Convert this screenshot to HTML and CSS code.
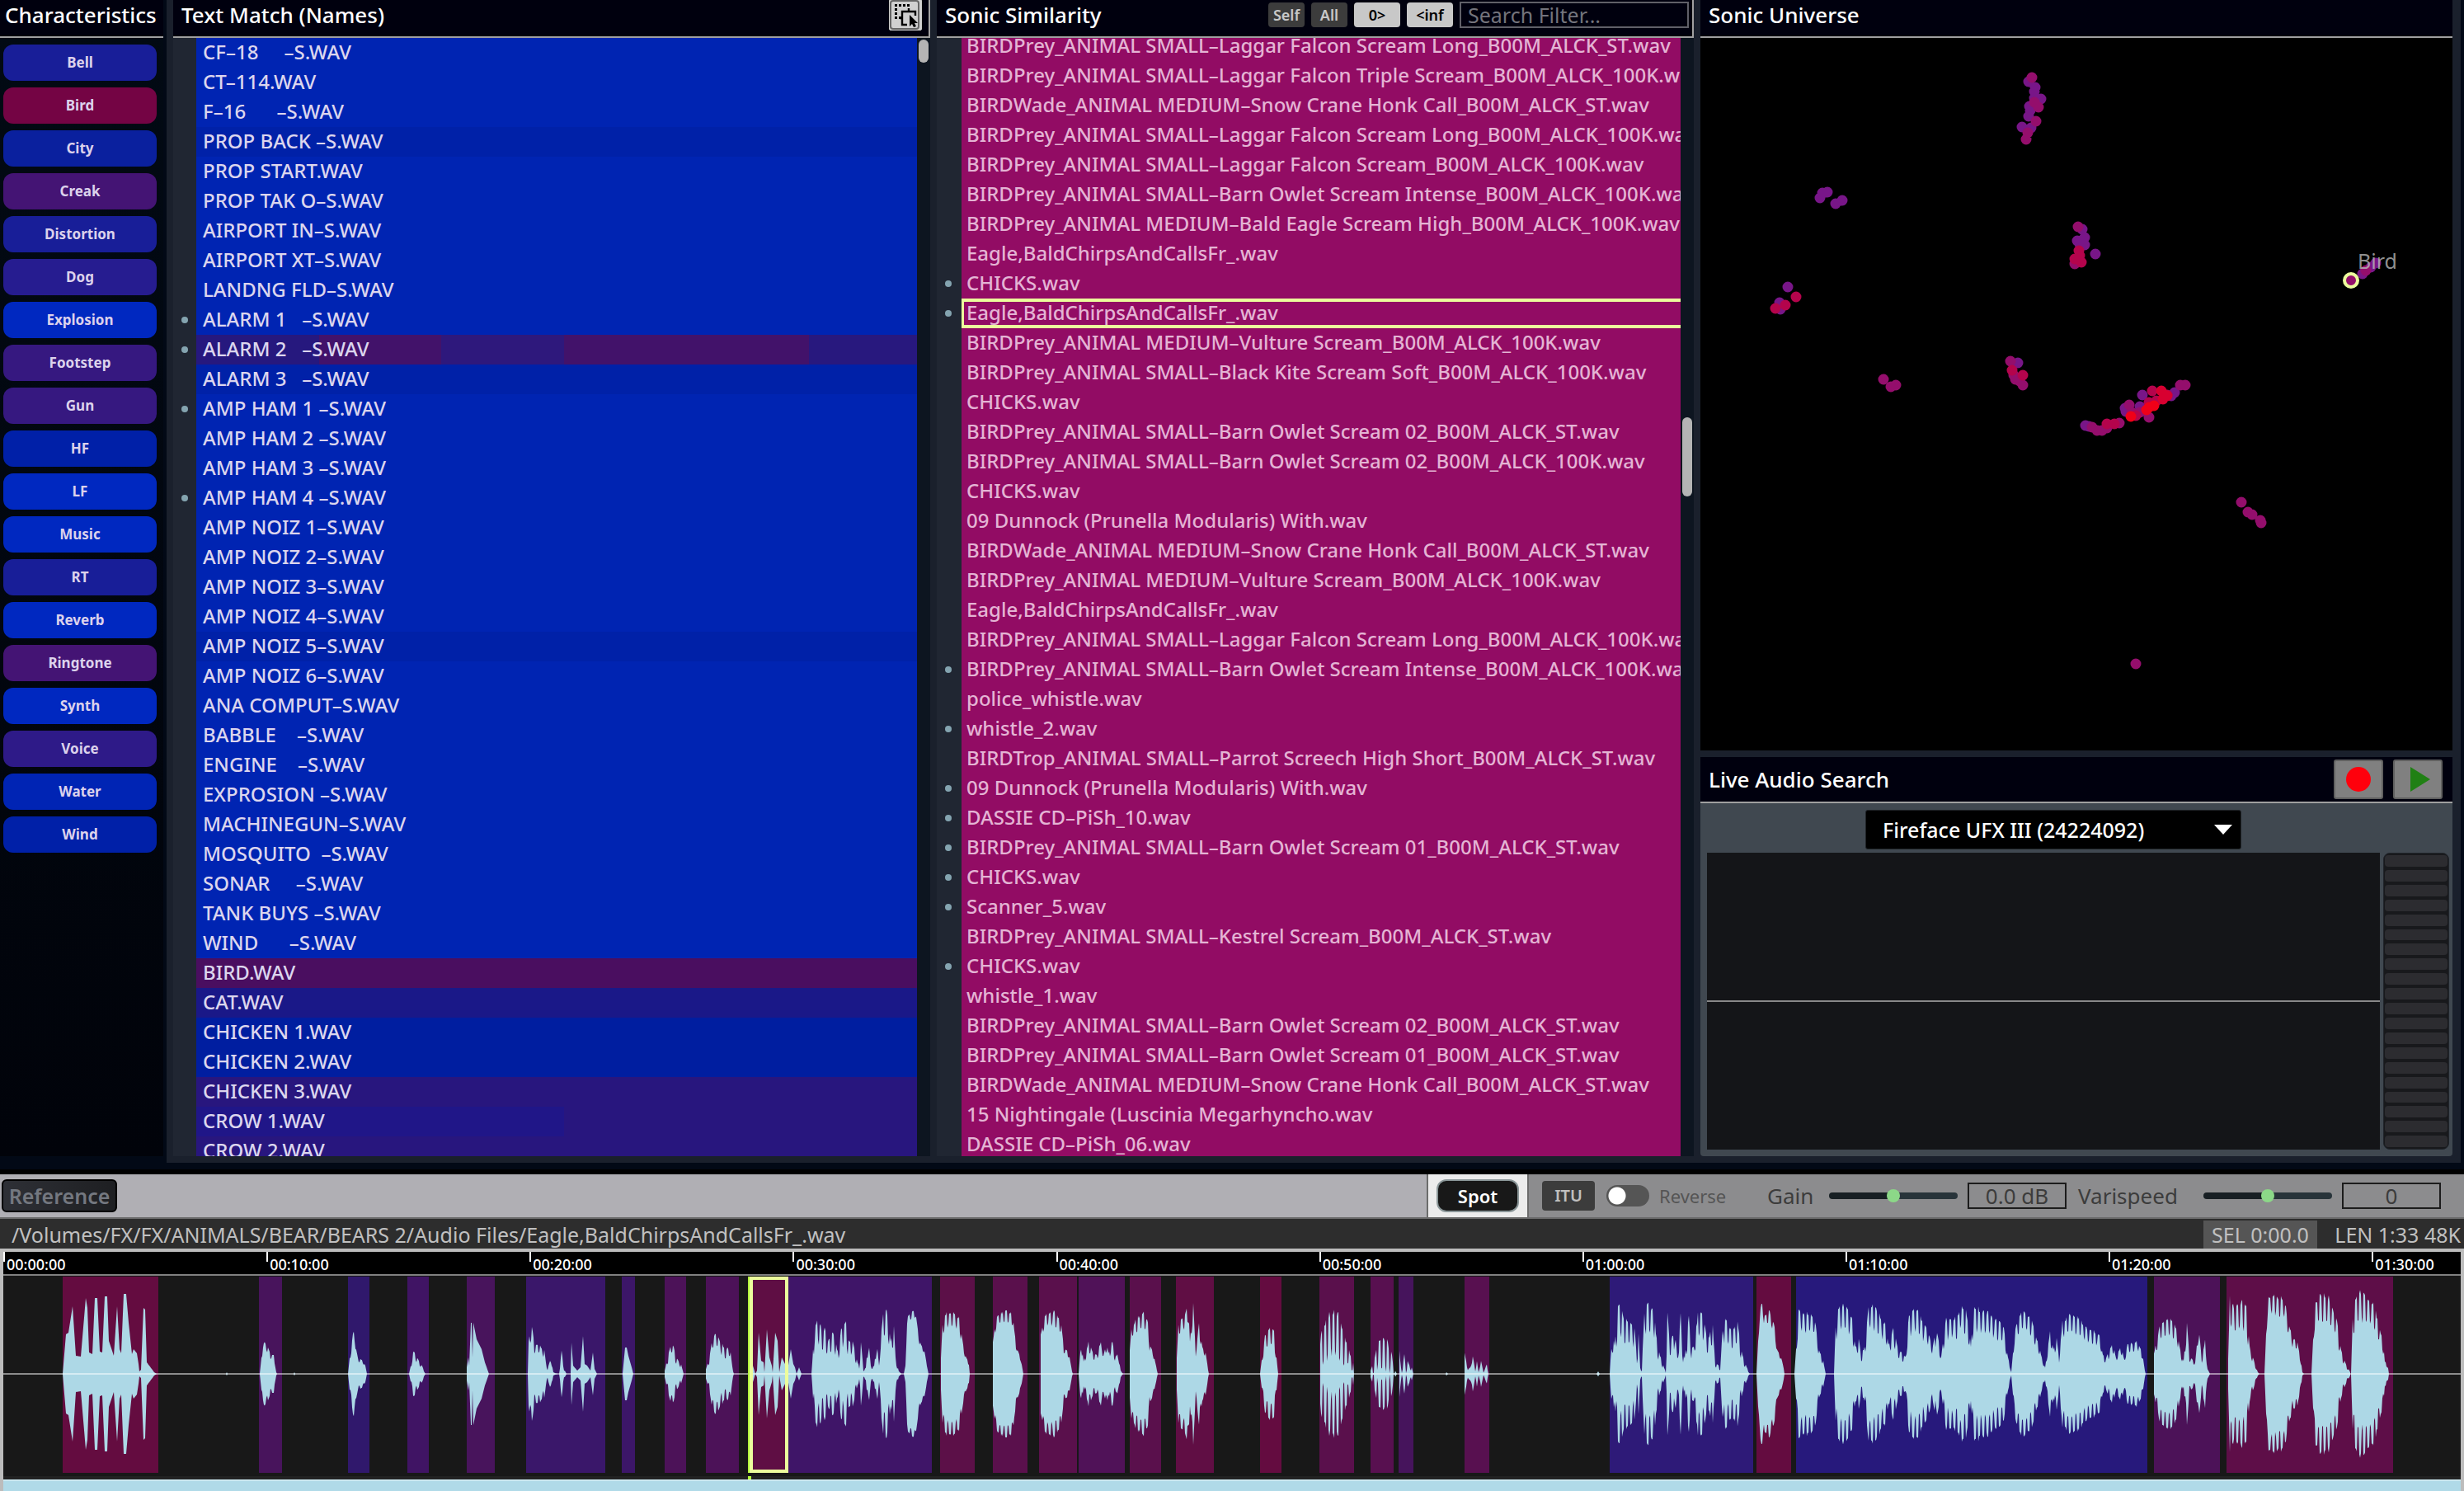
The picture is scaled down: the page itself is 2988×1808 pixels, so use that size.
FILE: index.html
```html
<!DOCTYPE html>
<html lang="en">
<head>
<meta charset="utf-8">
<title>Sonic Search</title>
<link rel="stylesheet" href="styles.css">
</head>
<body>
<main class="top">
  <section class="characteristics">
    <h2 class="head">Characteristics</h2>
    <div class="tags">
      <button class="tag c-indigo">Bell</button>
      <button class="tag c-crimson">Bird</button>
      <button class="tag c-navy">City</button>
      <button class="tag c-plum">Creak</button>
      <button class="tag c-indigo">Distortion</button>
      <button class="tag c-violet">Dog</button>
      <button class="tag c-bright">Explosion</button>
      <button class="tag c-purple">Footstep</button>
      <button class="tag c-purple">Gun</button>
      <button class="tag c-blue">HF</button>
      <button class="tag c-bright">LF</button>
      <button class="tag c-bright">Music</button>
      <button class="tag c-indigo">RT</button>
      <button class="tag c-bright">Reverb</button>
      <button class="tag c-plum">Ringtone</button>
      <button class="tag c-bright">Synth</button>
      <button class="tag c-voice">Voice</button>
      <button class="tag c-water">Water</button>
      <button class="tag c-blue">Wind</button>
    </div>
  </section>

  <div class="workspace">
    <section class="panel">
      <header class="head head-line">
        <h2>Text Match (Names)</h2>
        <button class="pick" aria-label="Select mode">
          <svg viewBox="0 0 36 36" width="36" height="36">
            <path d="M6 5h3v3h-3zM11 5h3v3h-3zM16 5h3v3h-3zM21 5h3v3h-3zM6 10h3v3h-3zM6 15h3v3h-3zM6 20h3v3h-3zM11 20h3v3h-3z"/>
            <path d="M21 30h-6V14h16v5M23 14v-4M15 22h-3" fill="none" stroke="#000" stroke-width="2.4"/>
            <path d="M24 18v14l3-3 2 4 3-1-2-4h4z"/>
          </svg>
        </button>
      </header>
      <div class="scroller">
        <ul class="list names">
          <li>CF–18     –S.WAV</li>
          <li>CT–114.WAV</li>
          <li>F–16      –S.WAV</li>
          <li class="deep">PROP BACK –S.WAV</li>
          <li>PROP START.WAV</li>
          <li>PROP TAK O–S.WAV</li>
          <li>AIRPORT IN–S.WAV</li>
          <li>AIRPORT XT–S.WAV</li>
          <li>LANDNG FLD–S.WAV</li>
          <li class="dot">ALARM 1   –S.WAV</li>
          <li class="dot mixed">ALARM 2   –S.WAV</li>
          <li class="deep">ALARM 3   –S.WAV</li>
          <li class="dot">AMP HAM 1 –S.WAV</li>
          <li>AMP HAM 2 –S.WAV</li>
          <li>AMP HAM 3 –S.WAV</li>
          <li class="dot">AMP HAM 4 –S.WAV</li>
          <li>AMP NOIZ 1–S.WAV</li>
          <li>AMP NOIZ 2–S.WAV</li>
          <li>AMP NOIZ 3–S.WAV</li>
          <li>AMP NOIZ 4–S.WAV</li>
          <li class="deep">AMP NOIZ 5–S.WAV</li>
          <li>AMP NOIZ 6–S.WAV</li>
          <li>ANA COMPUT–S.WAV</li>
          <li>BABBLE    –S.WAV</li>
          <li>ENGINE    –S.WAV</li>
          <li>EXPROSION –S.WAV</li>
          <li>MACHINEGUN–S.WAV</li>
          <li>MOSQUITO  –S.WAV</li>
          <li>SONAR     –S.WAV</li>
          <li>TANK BUYS –S.WAV</li>
          <li>WIND      –S.WAV</li>
          <li class="wine">BIRD.WAV</li>
          <li class="ink">CAT.WAV</li>
          <li class="navy">CHICKEN 1.WAV</li>
          <li class="navy">CHICKEN 2.WAV</li>
          <li class="violet">CHICKEN 3.WAV</li>
          <li class="split">CROW 1.WAV</li>
          <li class="violet">CROW 2.WAV</li>
        </ul>
        <div class="track"><div class="thumb thumb-top"></div></div>
      </div>
    </section>

    <section class="panel">
      <header class="head head-line">
        <h2>Sonic Similarity</h2>
        <div class="filters">
          <button class="chip">Self</button>
          <button class="chip">All</button>
          <button class="chip chip-on">0&gt;</button>
          <button class="chip chip-on">&lt;inf</button>
          <input class="search" type="text" placeholder="Search Filter..." aria-label="Search Filter">
        </div>
      </header>
      <div class="scroller">
        <ul class="list matches">
          <li>BIRDPrey_ANIMAL SMALL–Laggar Falcon Scream Long_B00M_ALCK_ST.wav</li>
          <li>BIRDPrey_ANIMAL SMALL–Laggar Falcon Triple Scream_B00M_ALCK_100K.wav</li>
          <li>BIRDWade_ANIMAL MEDIUM–Snow Crane Honk Call_B00M_ALCK_ST.wav</li>
          <li>BIRDPrey_ANIMAL SMALL–Laggar Falcon Scream Long_B00M_ALCK_100K.wav</li>
          <li>BIRDPrey_ANIMAL SMALL–Laggar Falcon Scream_B00M_ALCK_100K.wav</li>
          <li>BIRDPrey_ANIMAL SMALL–Barn Owlet Scream Intense_B00M_ALCK_100K.wav</li>
          <li>BIRDPrey_ANIMAL MEDIUM–Bald Eagle Scream High_B00M_ALCK_100K.wav</li>
          <li>Eagle,BaldChirpsAndCallsFr_.wav</li>
          <li class="dot">CHICKS.wav</li>
          <li class="dot current">Eagle,BaldChirpsAndCallsFr_.wav</li>
          <li>BIRDPrey_ANIMAL MEDIUM–Vulture Scream_B00M_ALCK_100K.wav</li>
          <li>BIRDPrey_ANIMAL SMALL–Black Kite Scream Soft_B00M_ALCK_100K.wav</li>
          <li>CHICKS.wav</li>
          <li>BIRDPrey_ANIMAL SMALL–Barn Owlet Scream 02_B00M_ALCK_ST.wav</li>
          <li>BIRDPrey_ANIMAL SMALL–Barn Owlet Scream 02_B00M_ALCK_100K.wav</li>
          <li>CHICKS.wav</li>
          <li>09 Dunnock (Prunella Modularis) With.wav</li>
          <li>BIRDWade_ANIMAL MEDIUM–Snow Crane Honk Call_B00M_ALCK_ST.wav</li>
          <li>BIRDPrey_ANIMAL MEDIUM–Vulture Scream_B00M_ALCK_100K.wav</li>
          <li>Eagle,BaldChirpsAndCallsFr_.wav</li>
          <li>BIRDPrey_ANIMAL SMALL–Laggar Falcon Scream Long_B00M_ALCK_100K.wav</li>
          <li class="dot">BIRDPrey_ANIMAL SMALL–Barn Owlet Scream Intense_B00M_ALCK_100K.wav</li>
          <li>police_whistle.wav</li>
          <li class="dot">whistle_2.wav</li>
          <li>BIRDTrop_ANIMAL SMALL–Parrot Screech High Short_B00M_ALCK_ST.wav</li>
          <li class="dot">09 Dunnock (Prunella Modularis) With.wav</li>
          <li class="dot">DASSIE CD–PiSh_10.wav</li>
          <li class="dot">BIRDPrey_ANIMAL SMALL–Barn Owlet Scream 01_B00M_ALCK_ST.wav</li>
          <li class="dot">CHICKS.wav</li>
          <li class="dot">Scanner_5.wav</li>
          <li>BIRDPrey_ANIMAL SMALL–Kestrel Scream_B00M_ALCK_ST.wav</li>
          <li class="dot">CHICKS.wav</li>
          <li>whistle_1.wav</li>
          <li>BIRDPrey_ANIMAL SMALL–Barn Owlet Scream 02_B00M_ALCK_ST.wav</li>
          <li>BIRDPrey_ANIMAL SMALL–Barn Owlet Scream 01_B00M_ALCK_ST.wav</li>
          <li>BIRDWade_ANIMAL MEDIUM–Snow Crane Honk Call_B00M_ALCK_ST.wav</li>
          <li>15 Nightingale (Luscinia Megarhyncho.wav</li>
          <li>DASSIE CD–PiSh_06.wav</li>
        </ul>
        <div class="track"><div class="thumb thumb-mid"></div></div>
      </div>
    </section>

    <div class="side">
      <section class="panel universe">
        <header class="head side-head"><h2>Sonic Universe</h2></header>
        <svg class="stars" viewBox="0 0 912 864" preserveAspectRatio="xMidYMin meet" role="img" aria-label="Map of similar sounds">
          <g fill="none" stroke-width="13" stroke-linecap="round">
            <path stroke="#781688" d="M398 53h0M406 60h0M405 65h0M413 74h0M405 73h0M399 83h0M400 88h0M398 95h0M390 108h0M401 109h0M145 194h0M148 188h0M154 187h0M172 197h0M164 201h0M463 232h0M466 242h0M457 246h0M460 250h0M466 251h0M479 262h0M819 273h0M813 278h0M803 286h0M106 302h0M96 321h0M97 329h0M385 394h0M575 430h0M571 434h0M536 433h0M533 447h0M515 449h0M516 453h0M467 470h0M471 471h0"/>
            <path stroke="#940e6c" d="M402 48h0M405 78h0M410 84h0M407 101h0M397 115h0M395 123h0M458 229h0M454 274h0M807 282h0M222 414h0M237 421h0M231 423h0M376 392h0M380 409h0M382 414h0M391 421h0M387 416h0M588 421h0M582 421h0M533 454h0M520 445h0M523 454h0M544 460h0M508 467h0M493 473h0M487 476h0M481 476h0M475 472h0M656 563h0M664 575h0M669 578h0M679 585h0M680 588h0M528 759h0"/>
            <path stroke="#b4044c" d="M459 258h0M460 264h0M454 268h0M462 272h0M459 269h0M116 314h0M103 324h0M91 328h0M378 403h0M391 409h0M548 428h0M566 433h0M553 440h0M544 442h0M528 458h0M502 468h0M493 468h0"/>
            <path stroke="#d80030" d="M559 428h0M561 438h0M566 434h0"/>
            <path stroke="#f00018" d="M550 446h0M544 448h0M541 451h0M522 459h0"/>
          </g>
          <circle cx="789" cy="294" r="8" fill="#940e6c" stroke="#ecfc9c" stroke-width="4"/>
          <text class="star-label" x="797" y="280">Bird</text>
        </svg>
      </section>
      <section class="panel live">
        <header class="head live-head">
          <h2>Live Audio Search</h2>
          <div class="transport">
            <button aria-label="Record"><svg viewBox="0 0 56 44" width="56" height="44"><circle cx="28" cy="22" r="15" fill="#ff000c"/></svg></button>
            <button aria-label="Play"><svg viewBox="0 0 56 44" width="56" height="44"><path d="M19 7v30l24-15z" fill="#208014"/></svg></button>
          </div>
        </header>
        <div class="live-body">
          <div class="device">
            <select aria-label="Input device"><option>Fireface UFX III (24224092)</option></select>
            <svg class="caret" viewBox="0 0 22 12" width="22" height="12"><path d="M0 0h22l-11 12z" fill="#fff"/></svg>
          </div>
          <div class="capture">
            <div class="scope"></div>
            <div class="meter"><i></i><i></i><i></i><i></i><i></i><i></i><i></i><i></i><i></i><i></i><i></i><i></i><i></i><i></i><i></i><i></i><i></i><i></i><i></i><i></i></div>
          </div>
        </div>
      </section>
    </div>
  </div>
</main>

<footer class="player">
  <div class="toolbar">
    <button class="reference">Reference</button>
    <div class="spot-cell"><button class="spot">Spot</button></div>
    <div class="controls">
      <button class="itu">ITU</button>
      <label class="reverse"><input type="checkbox"><span>Reverse</span></label>
      <label class="knob"><span>Gain</span><input type="range" min="-10" max="10" value="0"></label>
      <output class="value">0.0 dB</output>
      <label class="knob vari"><span>Varispeed</span><input type="range" min="-10" max="10" value="0"></label>
      <output class="value">0</output>
    </div>
  </div>
  <div class="pathbar">
    <span class="path">/Volumes/FX/FX/ANIMALS/BEAR/BEARS 2/Audio Files/Eagle,BaldChirpsAndCallsFr_.wav</span>
    <span class="sel">SEL 0:00.0</span>
    <span class="len">LEN 1:33 48K</span>
  </div>
  <div class="timeline">
    <div class="ruler">
      <span>00:00:00</span><span>00:10:00</span><span>00:20:00</span><span>00:30:00</span><span>00:40:00</span><span>00:50:00</span><span>01:00:00</span><span>01:10:00</span><span>01:20:00</span><span>01:30:00</span>
    </div>
    <svg class="wave" viewBox="4 0 2980 242" preserveAspectRatio="none" role="img" aria-label="Waveform">
      <g id="regions"></g>
      <path id="wave" fill="#add8e6"/>
      <path d="M4 118h2980" stroke="#fff" stroke-opacity=".5" stroke-width="2"/>
      <path d="M908 0v238" stroke="#b4ff3c" stroke-width="2"/>
      <path d="M911 2h43v234h-43z" fill="none" stroke="#ecfc9c" stroke-width="4"/>
    </svg>
    <div class="overview"><i></i></div>
  </div>
</footer>
<script src="wave.js"></script>
</body>
</html>
```

FILE: styles.css
```css
* { box-sizing: border-box; }
body {
  margin: 0;
  height: 100vh;
  display: flex;
  flex-direction: column;
  overflow: hidden;
  background: #020916;
  color: #fff;
  font: 24px/36px "Noto Sans", "Open Sans", sans-serif;
}
button, input, select { font: inherit; color: inherit; margin: 0; padding: 0; }
h2 { margin: 0; font-size: 26px; font-weight: 500; line-height: 36px; white-space: nowrap; }
svg { display: block; }

.top { flex: 1; min-height: 0; display: flex; padding: 0 4px 8px 0; }
.head {
  flex: none;
  height: 46px;
  padding-left: 6px;
  padding-bottom: 8px;
  background: #00000e;
  border-bottom: 2px solid #a0a0a0;
  display: flex;
  align-items: center;
  justify-content: space-between;
}
.head-line { border-right: 2px solid #a0a0a0; padding-left: 10px; }
.side-head { padding-left: 10px; }

.characteristics {
  flex: none;
  width: 198px;
  margin-right: 4px;
  margin-bottom: 8px;
  background: linear-gradient(#020a14, #01030a);
}
.tags { padding: 8px 8px 8px 4px; display: flex; flex-direction: column; gap: 8px; }
.tag {
  height: 44px;
  border: 0;
  border-radius: 12px;
  color: #dcd2ec;
  font-size: 17px;
  font-weight: 700;
}
.c-indigo { background: #181e98; }
.c-crimson { background: #740444; }
.c-navy { background: #0a209e; }
.c-plum { background: #441474; }
.c-violet { background: #261c90; }
.c-voice { background: #2e1a88; }
.c-bright { background: #0028c0; }
.c-purple { background: #361880; }
.c-blue { background: #0020a8; }
.c-water { background: #0024b4; }

.workspace {
  flex: 1;
  min-width: 0;
  display: grid;
  grid-template-columns: minmax(0, 918fr) minmax(0, 918fr) minmax(0, 912fr);
  gap: 8px;
  padding: 0 10px 8px 8px;
  background: #1a202c;
}
.panel { min-height: 0; display: flex; flex-direction: column; }
.workspace > .panel { height: 100%; overflow: hidden; }

.pick { width: 40px; height: 38px; border: 1px solid #ccc; background: #d0d0d0; margin-right: 8px; border-radius: 2px; }
.pick svg { outline: 2px solid #666; outline-offset: -2px; border-radius: 4px; }

.scroller { flex: 1; min-height: 0; display: flex; overflow: hidden; }
.list { flex: 1; min-width: 0; margin: 0; padding: 0; list-style: none; color: #dcd6ee; font-weight: 500; line-height: 34px; }
.list li {
  height: 36px;
  padding-left: 8px;
  white-space: pre;
  overflow: hidden;
  background: #0024b2;
}
.names { border-left: 28px solid #202632; }
.matches { border-left: 30px solid #202632; margin-top: -8px; color: #e4b4d4; }
.matches li { padding-left: 6px; background: #920c64; }
.list .dot { overflow: visible; display: flex; align-items: flex-start; }
.list .dot::before {
  content: "";
  flex: none;
  width: 8px;
  height: 8px;
  border-radius: 4px;
  background: #84a4b0;
  margin: 14px 18px 0 -26px;
}
.matches .dot { clip-path: inset(0 0 0 -30px); }
.list .deep { background: #0021a8; }
.list .navy { background: #001ea0; }
.list .wine { background: #4a0e60; }
.list .ink { background: #1a1888; }
.list .violet { background: #28167e; }
.list .split { background: linear-gradient(90deg, #201688 51%, #28167e 51%); }
.list .mixed { background: linear-gradient(90deg, #26187e 17%, #42126a 17% 34%, #2e187c 34% 51%, #42126a 51% 85%, #28187e 85%); }
.list .current { box-shadow: inset 0 4px #ecfc9c, inset 0 -4px #ecfc9c, inset 3px 0 #ecfc9c; }

.track { flex: none; width: 16px; background: #0d1520; padding: 2px; }
.thumb { width: 12px; border-radius: 6px; background: #b4b4b4; }
.thumb-top { height: 28px; }
.thumb-mid { height: 96px; margin-top: 458px; }

.filters { display: flex; align-items: center; gap: 8px; padding-right: 4px; }
.chip {
  height: 30px;
  width: 44px;
  border: 0;
  border-radius: 4px;
  background: #3c3c3c;
  color: #c8c8c8;
  font-size: 18px;
  line-height: 28px;
  font-weight: 600;
}
.chip-on { width: 56px; background: #c8c8c8; color: #000; }
.search {
  width: 278px;
  height: 32px;
  border: 2px solid #606068;
  background: #00000e;
  padding-left: 8px;
  font-size: 25px;
}
.search::placeholder { color: #74747c; opacity: 1; }

.side { min-width: 0; display: grid; grid-template-rows: minmax(0, 910fr) minmax(0, 484fr); gap: 8px; }
.universe { background: #000; }
.stars { width: 100%; flex: 1; min-height: 0; }
.star-label { font-size: 25px; fill: #b8b8b8; fill-opacity: .8; }
.live { background: #404850; border-radius: 0 0 4px 4px; }
.live-head { height: 56px; padding: 0 12px 0 10px; }
.transport { display: flex; gap: 12px; }
.transport button { width: 60px; height: 48px; background: #808080; border: 2px solid #606060; border-radius: 3px; }
.live-body { flex: 1; min-height: 0; display: flex; flex-direction: column; padding: 8px 4px 8px 8px; }
.device {
  width: 456px;
  height: 48px;
  margin: 0 0 4px 192px;
  display: flex;
  align-items: center;
  background: #000;
  border: 1px solid #202428;
  border-radius: 3px;
}
.device select { flex: 1; min-width: 0; height: 46px; padding-left: 20px; border: 0; appearance: none; background: none; font-size: 25px; font-weight: 500; }
.caret { margin-right: 10px; }
.capture { flex: 1; min-height: 0; display: flex; gap: 4px; }
.scope { flex: 1; background: linear-gradient(#888, #888) center / 100% 2px no-repeat #141518; }
.meter { width: 80px; border: 1px solid #20242a; border-radius: 8px; background: #18191c; padding: 2px 1px; display: flex; flex-direction: column; gap: 4px; }
.meter i { flex: 1; border-radius: 4px; background: #2c2c30; }

.player { flex: none; border-top: 6px solid #000; background: #2d2d2d; }
.toolbar { height: 54px; display: flex; align-items: center; background: #b0afb4; border-bottom: 2px solid #6c6c6c; }
.reference {
  width: 140px;
  height: 40px;
  margin-left: 2px;
  border: 2px solid #000;
  border-radius: 6px;
  background: linear-gradient(90deg, #2e3036, #1e1f22);
  color: #747880;
  font-size: 25px;
  font-weight: 600;
  line-height: 34px;
}
.spot-cell { margin-left: auto; height: 52px; padding: 6px 10px; background: #ececec; border: solid #6c6c6c; border-width: 0 2px; }
.spot { width: 100px; height: 40px; border: 2px solid #8a9698; border-radius: 12px; background: #181818; font-size: 22px; font-weight: 600; line-height: 34px; }
.controls { height: 52px; padding: 0 28px 0 16px; display: flex; align-items: center; background: #8c8c8e; color: #3c3c3c; }
.itu { width: 64px; height: 36px; border: 0; border-radius: 4px; background: #3c3c3c; color: #c0c0c0; font-size: 20px; font-weight: 600; }
.reverse { width: 195px; margin-left: 14px; display: flex; align-items: center; gap: 12px; font-size: 22px; color: #555; }
.reverse input { appearance: none; width: 52px; height: 26px; border-radius: 13px; background: radial-gradient(circle at 13px 13px, #fff 10px, #555 11px); }
.knob { display: flex; align-items: center; width: 231px; justify-content: space-between; font-size: 26px; }
.vari { width: 308px; margin-left: 14px; }
.knob input { appearance: none; width: 156px; height: 8px; border-radius: 4px; background: linear-gradient(90deg, #182024 50%, #28343a 50%); }
.knob input::-webkit-slider-thumb { appearance: none; width: 16px; height: 16px; border-radius: 8px; background: #8cd888; }
.value { width: 120px; height: 32px; margin-left: 12px; border: 2px solid #1c1c1c; text-align: center; font-size: 26px; line-height: 28px; }

.pathbar { height: 36px; padding-left: 14px; display: flex; align-items: flex-end; color: #c0c0c0; font-size: 25px; line-height: 34px; white-space: nowrap; }
.path { flex: 1; }
.sel { width: 138px; height: 34px; text-align: center; background: #555; }
.len { width: 178px; padding-right: 4px; text-align: right; }

.timeline { border: solid #bcbcbc; border-width: 4px 4px 0; background: #181818; }
.ruler { height: 29px; display: flex; background: #000; border-bottom: 2px solid #808080; }
.ruler span { flex: 0 0 10.709%; padding: 4px 0 0 4px; font-size: 18px; font-weight: 500; line-height: 22px; background: linear-gradient(#fff, #fff) 0 0 / 2px 12px no-repeat; }
.ruler span:last-child { flex: 1 1 0; }
.wave { width: 100%; height: 242px; margin-top: 1px; }
.overview { height: 18px; padding-top: 4px; background: #222; position: relative; }
.overview i { display: block; height: 14px; background: #b0dae8; border-top: 2px solid #cce8f0; }
.overview::before { content: ""; position: absolute; left: 903px; top: 0; width: 4px; height: 4px; background: #b4ff3c; }
```

FILE: wave.js
```js
// Detected events: start, end, colour
const regions = [
  [76,192,'#640c40'],[314,342,'#48145c'],[422,448,'#30186c'],[494,520,'#401464'],[566,600,'#48145c'],
  [638,734,'#3a176a'],[754,770,'#3c1668'],[806,832,'#4c1258'],[856,896,'#4c1258'],[907,956,'#5f0e44'],
  [956,1130,'#3f1568'],[1140,1182,'#5c1048'],[1204,1246,'#5a104c'],[1260,1306,'#5a104c'],[1308,1364,'#501258'],
  [1370,1408,'#5a104c'],[1426,1472,'#600e44'],[1528,1554,'#640c40'],[1600,1642,'#5a104c'],[1662,1690,'#581050'],
  [1696,1714,'#46145c'],[1776,1806,'#581050'],[1952,2126,'#2e1a78'],[2130,2172,'#640c40'],[2178,2604,'#27197c'],
  [2612,2692,'#4c1258'],[2700,2902,'#5e0e48']
];

// Peak envelopes as "position:level" with the ripple depth of each burst
const bursts = [
  [0,'76:0 80:48 83:50 88:82 92:22 98:21 104:92 106:80 108:26 112:24 115:92 118:92 121:27 124:26 127:94 130:94 132:40 138:22 142:82 145:30 147:25 150:97 153:97 156:62 160:24 162:30 166:25 168:12 169:3 171:5 174:80 176:78 178:14 184:6 187:2 190:0'],
  [0,'274:0 275:2 276:0'],
  [.2,'315:0 319:40 323:38 326:30 328:24 332:24 335:2 336:0'],[0,'356:0 357:2 358:0'],
  [.2,'422:0 424:20 428:50 430:54 432:30 434:20 440:17 443:10 445:0'],
  [.3,'496:0 498:10 501:28 504:26 508:16 512:10 516:0'],
  [0,'566:8 568:20 569:10 571:62 572:62 573:20 574:62 578:42 584:30 588:14 593:0'],
  [.25,'640:0 641:42 645:60 648:38 654:36 660:30 662:14 664:6 668:20 671:2 676:0 678:0 681:30 684:6 687:0'],
  [0,'692:2 693:38 695:10 700:4 704:8 707:46 709:12 712:10 716:4 719:26 721:6 724:0'],
  [0,'755:0 758:32 760:32 762:22 766:8 768:0'],
  [.3,'806:4 810:22 815:42 820:20 826:12 829:0'],
  [.3,'856:6 860:20 864:46 869:52 874:40 880:30 885:36 888:10 890:0'],
  [0,'910:0 913:10 916:0 918:4 920:50 923:16 926:14 927:2 930:54 933:20 936:10 937:2 940:50 943:40 945:2 948:20 952:12 955:4 959:30 962:12 964:8 966:0 969:8 972:0'],
  [.35,'984:0 986:30 988:62 992:66 995:62 998:50 1000:58 1004:42 1010:56 1016:28 1020:58 1026:64 1028:44 1034:42 1040:14 1042:10 1044:42 1047:6 1050:8 1053:46 1056:10 1060:10 1063:42 1066:10 1068:48 1072:82 1076:78 1080:40 1084:62 1086:22 1088:12 1090:3 1093:1'],
  [.1,'1096:0 1098:10 1100:68 1104:76 1110:78 1115:40 1121:28 1126:0'],
  [.2,'1141:20 1143:62 1148:78 1156:76 1163:70 1168:36 1171:22 1175:14 1176:0'],
  [.15,'1204:40 1208:70 1212:74 1220:78 1228:74 1232:36 1238:18 1241:0'],
  [.2,'1262:48 1266:70 1270:78 1278:78 1286:68 1290:34 1296:26 1300:4 1301:0'],
  [.25,'1308:0 1311:40 1314:16 1320:40 1326:24 1330:24 1336:44 1338:22 1342:40 1344:26 1349:42 1352:22 1356:26 1359:4 1362:0'],
  [.2,'1370:30 1372:56 1378:68 1386:78 1392:64 1394:36 1398:28 1402:10 1404:0'],
  [.2,'1427:20 1429:60 1435:72 1441:84 1443:40 1447:86 1450:28 1454:62 1458:34 1462:26 1465:6 1466:0'],
  [.3,'1528:0 1530:18 1534:48 1538:58 1545:54 1549:10 1550:0'],
  [.6,'1601:40 1604:64 1610:74 1618:80 1626:72 1630:50 1634:40 1637:24 1641:14 1642:0'],
  [.7,'1662:4 1666:20 1671:42 1677:50 1682:42 1688:24 1690:4 1692:4 1694:0'],
  [.4,'1697:28 1699:8 1700:2 1703:26 1705:2 1707:16 1710:10 1712:8 1714:0'],[0,'1753:0 1754:2 1756:0'],
  [.2,'1776:26 1780:6 1783:8 1786:22 1789:4 1791:16 1793:2 1796:16 1799:2 1803:12 1805:0'],[0,'1936:0 1938:3 1940:0'],
  [.35,'1952:0 1955:50 1958:36 1962:84 1966:86 1970:70 1976:68 1982:60 1985:20 1987:50 1989:8 1991:6 1994:80 1996:88 2005:84 2010:34 2016:14 2020:2 2022:78 2025:40 2031:56 2034:20 2038:74 2041:26 2043:20 2048:76 2051:34 2054:36 2060:84 2066:70 2070:42 2077:60 2080:16 2086:8 2090:74 2094:66 2100:56 2107:66 2111:32 2116:14 2121:2 2122:0'],
  [.15,'2130:0 2134:80 2137:88 2140:72 2146:78 2152:58 2155:30 2160:20 2164:4 2164:0'],
  [.25,'2176:0 2181:80 2186:76 2192:76 2200:74 2206:30 2211:16 2214:0'],
  [.3,'2224:0 2226:60 2230:86 2234:86 2240:84 2246:70 2250:34 2254:44 2257:24 2261:34 2266:88 2273:86 2280:74 2286:64 2290:38 2296:56 2302:30 2311:22 2315:76 2323:84 2330:70 2336:60 2344:34 2348:60 2354:22 2360:70 2366:70 2374:72 2378:90 2384:80 2390:36 2393:84 2402:82 2412:76 2420:68 2430:60 2434:26 2439:2'],
  [.25,'2439:2 2443:50 2448:74 2456:78 2464:66 2472:36 2478:14 2480:8 2486:54 2490:30 2494:44 2497:20 2501:66 2510:74 2520:70 2530:58 2546:50 2550:24 2554:20 2562:38 2566:20 2572:36 2576:18 2580:38 2586:38 2592:42 2598:26 2601:4 2602:0'],
  [.25,'2612:26 2620:64 2626:68 2634:68 2640:54 2644:30 2648:16 2652:64 2655:22 2662:14 2666:60 2670:20 2674:42 2677:6 2680:0'],
  [.3,'2702:20 2704:96 2710:84 2718:92 2724:84 2728:34 2734:14 2738:2 2740:0'],
  [.2,'2746:0 2750:98 2762:96 2770:94 2774:70 2780:44 2786:40 2791:10 2792:2 2794:0'],
  [.3,'2803:0 2807:88 2816:104 2826:94 2834:66 2838:34 2844:14 2850:2'],
  [.3,'2851:0 2853:70 2856:90 2862:104 2870:98 2878:90 2884:66 2890:40 2892:16 2895:14 2897:0']
];

const middle = 118;
const svgNS = 'http://www.w3.org/2000/svg';
const group = document.getElementById('regions');
for (const [start, end, colour] of regions) {
  const rect = document.createElementNS(svgNS, 'rect');
  rect.setAttribute('x', start);
  rect.setAttribute('width', end - start);
  rect.setAttribute('height', 238);
  rect.setAttribute('fill', colour);
  group.append(rect);
}

let seed = 7;
const random = () => (seed = (seed * 16807) % 2147483647) / 2147483647;

function levelAt(keys, x) {
  let k = 0;
  while (k < keys.length - 2 && keys[k + 1][0] <= x) k++;
  const [x0, a0] = keys[k];
  const [x1, a1] = keys[k + 1];
  return x1 === x0 ? a1 : a0 + (a1 - a0) * (x - x0) / (x1 - x0);
}

let d = '';
for (const [ripple, text] of bursts) {
  const keys = text.split(' ').map(pair => pair.split(':').map(Number));
  const first = keys[0][0];
  const last = keys[keys.length - 1][0];
  const peaks = [];
  // Crests alternate with dips so that tonal bursts show their comb of spikes
  for (let x = first; x <= last; x++) {
    const dip = (x - first) % 5 > 2 ? 1 + random() * .4 : random() * .3;
    peaks.push([x, levelAt(keys, x) * Math.max(0, 1 - ripple * dip)]);
  }
  const upper = peaks.map(([x, a]) => `${x} ${(middle - a).toFixed(1)}`);
  const lower = peaks.map(([x, a]) => `${x} ${(middle + a).toFixed(1)}`).reverse();
  d += `M${upper.concat(lower).join('L')}Z`;
}
document.getElementById('wave').setAttribute('d', d);
```
